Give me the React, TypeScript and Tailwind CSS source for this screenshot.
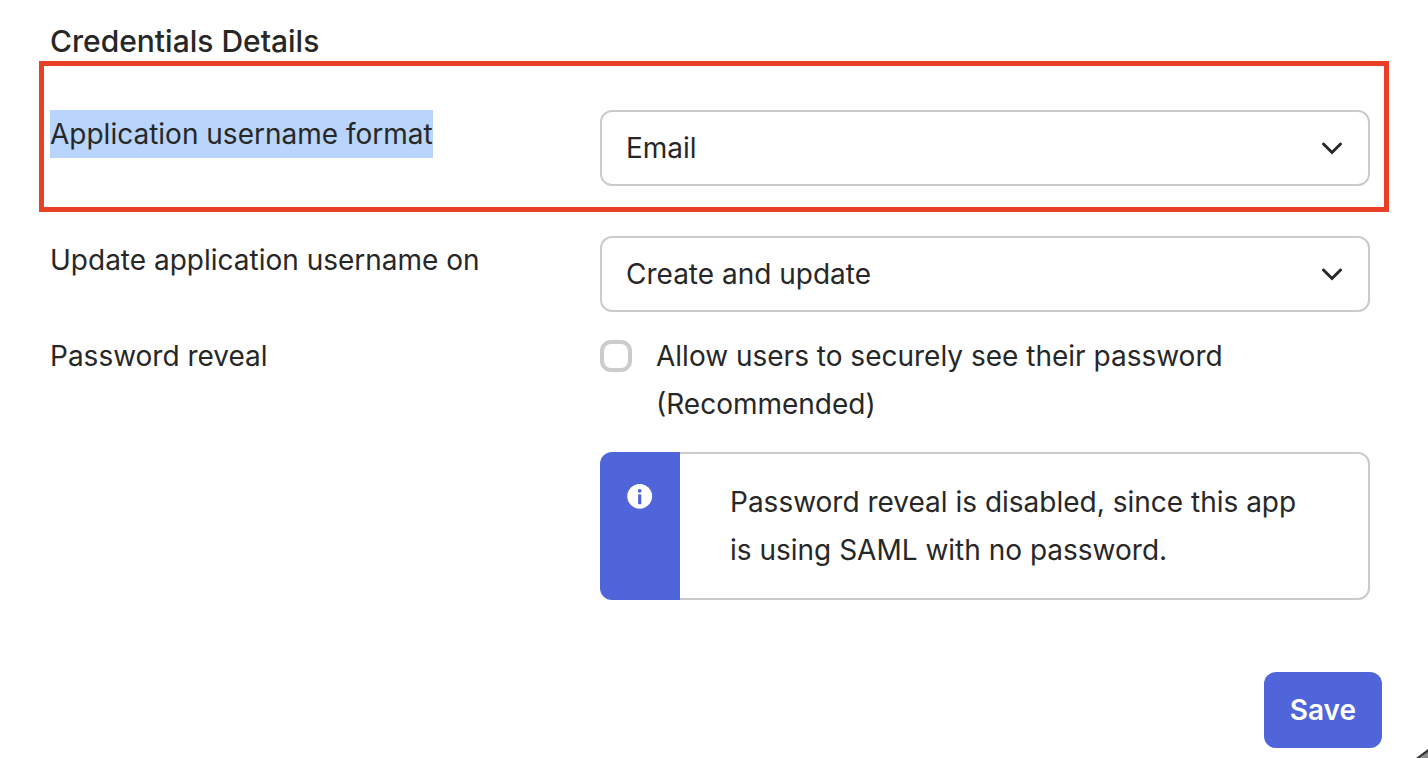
import type { ReactNode } from "react";

const fieldRow = "grid grid-cols-[550px_minmax(0,1fr)] items-start";

function Select({ id, options }: { id: string; options: string[] }) {
  return (
    <div className="grid items-center">
      <select
        id={id}
        className="col-start-1 row-start-1 h-[76px] w-full appearance-none rounded-xl border-2 border-[#cbcbcb] bg-white pr-16 pl-6 text-[28px] text-[#272727]"
      >
        {options.map((option) => (
          <option key={option}>{option}</option>
        ))}
      </select>
      <svg
        viewBox="0 0 24 16"
        className="pointer-events-none col-start-1 row-start-1 mr-[26px] h-4 w-6 justify-self-end"
        fill="none"
        stroke="#272727"
        strokeWidth="3"
        strokeLinecap="round"
        strokeLinejoin="miter"
        aria-hidden="true"
      >
        <path d="M3.5 4 L12 12.5 L20.5 4" />
      </svg>
    </div>
  );
}

function InfoBox({ children }: { children: ReactNode }) {
  return (
    <div className="mt-6 flex">
      <div className="flex w-20 justify-center rounded-l-xl bg-[#5065da] pt-8">
        <svg viewBox="0 0 26 26" className="h-[26px] w-[26px]" aria-hidden="true">
          <circle cx="12.7" cy="12.3" r="12.4" fill="#fff" />
          <circle cx="12.7" cy="6.8" r="1.9" fill="#5065da" />
          <rect x="11.1" y="10.4" width="3.2" height="9.8" fill="#5065da" />
        </svg>
      </div>
      <div className="flex-1 rounded-r-xl border-2 border-l-0 border-[#cbcbcb] py-6 pr-12 pl-[50px]">
        <p>{children}</p>
      </div>
    </div>
  );
}

export default function App() {
  return (
    <main className="relative min-h-screen overflow-hidden bg-white pt-[21px] pb-2.5 font-['Inter',sans-serif] text-[28px] leading-[48px] text-[#272727]">
      <h2 className="pl-[50px] text-[30px] leading-10 font-medium">Credentials Details</h2>

      <form onSubmit={(event) => event.preventDefault()}>
        <div className="mr-[39px] ml-[39px] border-5 border-[#ea4025] pt-11 pr-3.5 pb-[21px] pl-1.5">
          <div className={fieldRow}>
            <label htmlFor="format" className="justify-self-start bg-[#b9d5fb]">
              Application username format
            </label>
            <Select id="format" options={["Email", "Okta username", "Custom"]} />
          </div>
        </div>

        <div className="mt-6 pr-[58px] pl-[50px]">
          <div className={fieldRow}>
            <label htmlFor="update">Update application username on</label>
            <Select id="update" options={["Create and update", "Create only"]} />
          </div>

          <div className={"mt-5 " + fieldRow}>
            <span id="reveal-label">Password reveal</span>
            <div>
              <div className="flex items-start gap-6">
                <input
                  id="reveal"
                  type="checkbox"
                  aria-describedby="reveal-label"
                  className="mt-2 h-8 w-8 shrink-0 appearance-none rounded-[11px] border-4 border-[#cbcbcb] bg-white checked:bg-[#5065da]"
                />
                <label htmlFor="reveal">
                  Allow users to securely see their password (Recommended)
                </label>
              </div>
              <InfoBox>
                Password reveal is disabled, since this app is using SAML with no password.
              </InfoBox>
            </div>
          </div>
        </div>

        <div className="mt-[72px] flex justify-end pr-[46px]">
          <button
            type="submit"
            className="h-[76px] rounded-xl bg-[#5065da] px-[26px] font-semibold text-white"
          >
            Save
          </button>
        </div>
      </form>

      <svg
        viewBox="0 0 12 9"
        className="absolute right-0 bottom-0 h-[9px] w-3"
        aria-hidden="true"
      >
        <path d="M0 9 L12 0 V9 Z" fill="#333" />
        <path d="M3 9 L12 3 V9 Z" fill="#8c8c8c" />
      </svg>
    </main>
  );
}
